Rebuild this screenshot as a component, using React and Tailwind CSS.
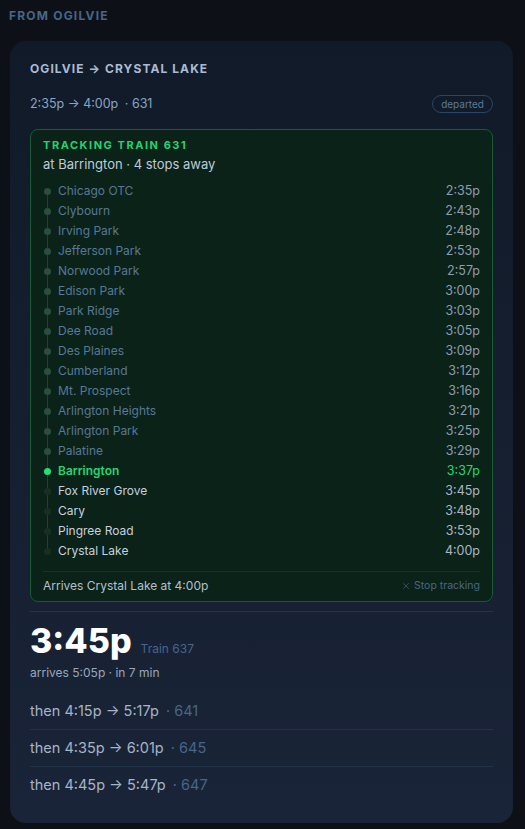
import React from "react";
import { X } from "lucide-react";

const stops = [
  ["Chicago OTC", "2:35p", "past"],
  ["Clybourn", "2:43p", "past"],
  ["Irving Park", "2:48p", "past"],
  ["Jefferson Park", "2:53p", "past"],
  ["Norwood Park", "2:57p", "past"],
  ["Edison Park", "3:00p", "past"],
  ["Park Ridge", "3:03p", "past"],
  ["Dee Road", "3:05p", "past"],
  ["Des Plaines", "3:09p", "past"],
  ["Cumberland", "3:12p", "past"],
  ["Mt. Prospect", "3:16p", "past"],
  ["Arlington Heights", "3:21p", "past"],
  ["Arlington Park", "3:25p", "past"],
  ["Palatine", "3:29p", "past"],
  ["Barrington", "3:37p", "current"],
  ["Fox River Grove", "3:45p", "next"],
  ["Cary", "3:48p", "next"],
  ["Pingree Road", "3:53p", "next"],
  ["Crystal Lake", "4:00p", "next"],
];

const later = [
  ["4:15p", "5:17p", "641"],
  ["4:35p", "6:01p", "645"],
  ["4:45p", "5:47p", "647"],
];

function StopRow({ name, time, state, first, last }) {
  const dot =
    state === "current"
      ? "bg-[#1fe07a]"
      : state === "past"
      ? "bg-[#2c4e3c]"
      : "bg-[#17301f]";
  const nameCls =
    state === "current"
      ? "text-[#22d873] font-semibold"
      : state === "past"
      ? "text-[#577898]"
      : "text-[#c6d1de]";
  const timeCls =
    state === "current"
      ? "text-[#22d873]"
      : state === "past"
      ? "text-[#8e9db0]"
      : "text-[#aab6c5]";
  return (
    <div className="flex h-5 items-stretch">
      <div className="flex w-2 flex-col items-center">
        <div className={"w-px flex-1 " + (first ? "" : "bg-[#24402f]")} />
        <div className={"h-[7px] w-[7px] shrink-0 rounded-full " + dot} />
        <div className={"w-px flex-1 " + (last ? "" : "bg-[#24402f]")} />
      </div>
      <div className={"ml-[7px] flex-1 self-center text-[12px] leading-4 " + nameCls}>{name}</div>
      <div className={"self-center text-[12.5px] leading-4 " + timeCls}>{time}</div>
    </div>
  );
}

export default function App() {
  return (
    <div
      className="min-h-screen bg-[#0d1117] pl-[10px] pr-[12px] pt-2 pb-2"
      style={{ fontFamily: "Inter, 'Noto Sans', sans-serif" }}
    >
      <div className="-ml-px text-[12px] font-bold leading-4 tracking-[0.1em] text-[#46668a]">
        FROM OGILVIE
      </div>

      <div className="mt-[17px] rounded-2xl bg-gradient-to-b from-[#111a28] to-[#1a2438] p-5">
        <div className="text-[12px] font-bold leading-4 tracking-[0.09em] text-[#a9bcd5]">
          OGILVIE → CRYSTAL LAKE
        </div>

        <div className="mt-[17px] flex h-5 items-center justify-between">
          <div className="text-[12.5px] text-[#8ba4c2]">
            2:35p → 4:00p <span className="ml-[3px]">· 631</span>
          </div>
          <div className="flex h-[18px] items-center rounded-full border border-[#2b4565] px-2 text-[10px] text-[#5b7999]">
            departed
          </div>
        </div>

        <div className="mt-[15px] rounded-lg border border-[#145c31] bg-[#0b2219] px-3 pt-[7px] pb-[7px]">
          <div className="text-[11px] font-bold leading-4 tracking-[0.14em] text-[#22d371]">
            TRACKING TRAIN 631
          </div>
          <div className="mt-px text-[13px] leading-5 text-[#bfcad8]">at Barrington · 4 stops away</div>

          <div className="mt-[7px] flex flex-col">
            {stops.map(([n, t, s], i) => (
              <StopRow key={n} name={n} time={t} state={s} first={i === 0} last={i === stops.length - 1} />
            ))}
          </div>

          <div className="mt-[10px] flex items-center justify-between border-t border-[#1b2f38] pt-[6px]">
            <div className="text-[12px] leading-4 text-[#b3c0cf]">Arrives Crystal Lake at 4:00p</div>
            <div className="flex items-center gap-[3px] text-[10.5px] leading-4 text-[#4a6686]">
              <X size={10} strokeWidth={1.5} />
              Stop tracking
            </div>
          </div>
        </div>

        <div className="mt-[9px] border-t border-[#24344a] pt-[11px]">
          <div className="flex items-baseline">
            <span className="text-[34px] font-extrabold leading-9 text-white">3:45p</span>
            <span className="ml-[9px] text-[12px] text-[#46668a]">Train 637</span>
          </div>
          <div className="mt-[6px] text-[12px] leading-4 text-[#98a8bc]">arrives 5:05p · in 7 min</div>
        </div>

        <div className="mt-[12px] flex flex-col">
          {later.map(([d, a, n], i) => (
            <div
              key={n}
              className={"py-2 text-[14.5px] leading-5 text-[#a6b4c6] " + (i > 0 ? "border-t border-[#223349]" : "")}
            >
              then {d} → {a} <span className="ml-[3px] text-[#46668a]">· {n}</span>
            </div>
          ))}
        </div>
      </div>
    </div>
  );
}
